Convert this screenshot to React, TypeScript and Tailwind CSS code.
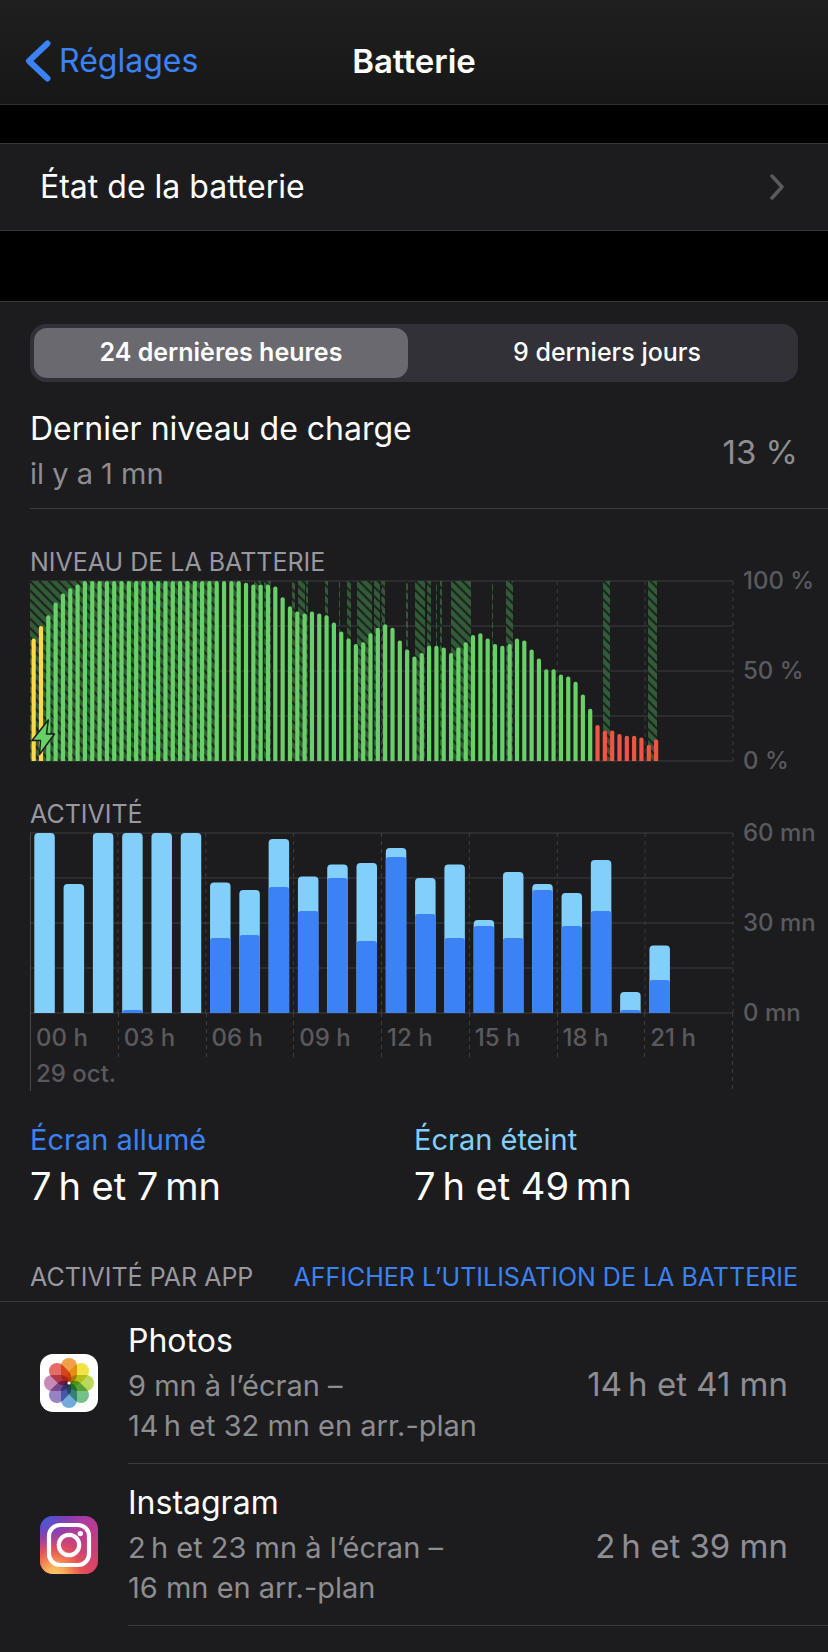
import React, { useState } from 'react';

const levels = [
  68, 75, 81, 88, 93, 96, 98, 100, 100, 100, 100, 100, 100, 100, 100, 100,
  100, 100, 100, 100, 100, 100, 100, 100, 100, 100, 100, 100, 100, 99, 98, 98,
  98, 97, 91, 86, 83, 82, 83, 82, 81, 77, 72, 68, 65, 66, 71, 74,
  76, 74, 67, 62, 58, 60, 64, 64, 63, 60, 63, 66, 70, 71, 68, 65,
  64, 65, 68, 67, 62, 57, 51, 51, 48, 47, 44, 37, 29, 20, 17, 17,
  15, 14, 14, 13, 9, 12,
];

// [start, width] of every charging period, in chart units
const charging = [
  [0, 188], [203, 4], [224, 7], [234, 7], [262, 3], [268, 7], [276, 2],
  [295, 3], [309, 1], [317, 4], [327, 15], [344, 6], [352, 3], [376, 2],
  [385, 10], [397, 4], [406, 1], [410, 2], [421, 20], [462, 1], [476, 7],
  [573, 7], [618, 9],
];

// [total minutes, minutes with the screen on] for each hour
const activity = [
  [60, 0], [43, 0], [60, 0], [60, 1], [60, 0], [60, 0], [43.5, 25], [41, 26],
  [58, 42], [45.5, 34], [49.5, 45], [50, 24], [55, 52], [45, 33], [49.5, 25], [31, 29],
  [47, 25], [43, 41], [40, 29], [51, 34], [7, 1], [22.5, 11],
];

const hours = ['00 h', '03 h', '06 h', '09 h', '12 h', '15 h', '18 h', '21 h'];

const apps = [
  {
    name: 'Photos',
    icon: <PhotosIcon />,
    lines: ['9 mn à l’écran –', '14\u202fh et 32 mn en arr.-plan'],
    total: '14\u202fh et 41 mn',
  },
  {
    name: 'Instagram',
    icon: <InstagramIcon />,
    lines: ['2\u202fh et 23 mn à l’écran –', '16 mn en arr.-plan'],
    total: '2\u202fh et 39 mn',
  },
];

const CHART_WIDTH = 703;

function bar(x: number, y: number, w: number, r: number) {
  const radius = Math.min(r, 180 - y);
  return `M${x} 180V${y + radius}q0 ${-radius} ${radius} ${-radius}h${w - 2 * radius}q${radius} 0 ${radius} ${radius}V180z`;
}

function barColor(level: number, index: number) {
  if (index < 2) return '#fed945';
  return level <= 20 ? '#ef5545' : '#67d067';
}

function PhotosIcon() {
  const petals = ['#f0a045', '#f3e342', '#bcd85a', '#74c088', '#74abdc', '#9683c4', '#c689b8', '#e46c64'];
  return (
    <svg viewBox="0 0 58 58" className="size-[58px] isolate" aria-hidden="true">
      <rect width="58" height="58" rx="13" fill="#fff" />
      {petals.map((color, i) => (
        <rect
          key={color}
          x="21"
          y="4"
          width="16"
          height="25"
          rx="8"
          fill={color}
          transform={`rotate(${i * 45} 29 29)`}
          className="mix-blend-multiply"
        />
      ))}
      <circle cx="29" cy="29" r="1.6" fill="#fff" />
    </svg>
  );
}

function InstagramIcon() {
  return (
    <svg viewBox="0 0 58 58" className="size-[58px]" aria-hidden="true">
      <defs>
        <linearGradient id="ig-base" x1="0.1" y1="0" x2="0.8" y2="1">
          <stop offset="0" stopColor="#6a3fc0" />
          <stop offset="0.4" stopColor="#b03a9c" />
          <stop offset="1" stopColor="#dc3f62" />
        </linearGradient>
        <radialGradient id="ig-warm" cx="0.25" cy="1.05" r="0.85">
          <stop offset="0" stopColor="#fbd673" />
          <stop offset="0.25" stopColor="#f7a556" />
          <stop offset="0.55" stopColor="#e8584f" stopOpacity="0.9" />
          <stop offset="1" stopColor="#d0407c" stopOpacity="0" />
        </radialGradient>
        <radialGradient id="ig-cold" cx="0.05" cy="0" r="0.55">
          <stop offset="0" stopColor="#4263d8" />
          <stop offset="1" stopColor="#6a3fc0" stopOpacity="0" />
        </radialGradient>
      </defs>
      <rect width="58" height="58" rx="13" fill="url(#ig-base)" />
      <rect width="58" height="58" rx="13" fill="url(#ig-warm)" />
      <rect width="58" height="58" rx="13" fill="url(#ig-cold)" />
      <g fill="none" stroke="#fff" strokeWidth="4.2">
        <rect x="9" y="9" width="40" height="40" rx="11" />
        <circle cx="29" cy="29" r="10.2" />
      </g>
      <circle cx="40.3" cy="17.6" r="2.7" fill="#fff" />
    </svg>
  );
}

function Grid() {
  return (
    <g fill="none">
      {[0, 45, 90, 135, 180].map((y) => (
        <path key={y} d={`M0 ${y}H${CHART_WIDTH}`} stroke="#2c2c2e" strokeWidth="2" />
      ))}
      {[1, 2, 3, 4, 5, 6, 7, 8].map((i) => (
        <path key={i} d={`M${(i * CHART_WIDTH) / 8} 0V180`} stroke="#3d3d40" strokeDasharray="4 4" />
      ))}
    </g>
  );
}

function Axis({ labels }: { labels: string[] }) {
  return (
    <div className="-my-3 flex w-[95px] shrink-0 flex-col justify-between pl-[10px] text-2xl leading-6 font-medium text-[#5a5a5e]">
      {labels.map((label) => (
        <span key={label} className="whitespace-nowrap">{label}</span>
      ))}
    </div>
  );
}

function LevelChart() {
  const step = CHART_WIDTH / 96;
  return (
    <svg
      viewBox={`0 0 ${CHART_WIDTH} 180`}
      preserveAspectRatio="none"
      className="h-[180px] min-w-0 flex-1 overflow-visible"
      role="img"
      aria-label="Niveau de la batterie"
    >
      <defs>
        <pattern id="hatch" width="9.4" height="9.4" viewBox="0 0 9 9" patternUnits="userSpaceOnUse">
          <rect width="9" height="9" fill="#315c37" />
          <path d="M-2 -2L11 11M-2 7L2 11M7 -2L11 2" stroke="#1c1f1e" strokeWidth="2" />
        </pattern>
      </defs>
      <Grid />
      {charging.map(([x, w]) => (
        <rect key={x} x={x} y="0" width={w} height="180" fill="url(#hatch)" />
      ))}
      {levels.map((level, i) => (
        <path key={i} d={bar(i * step + step / 2 - 2.1, 180 - level * 1.8, 4.2, 2)} fill={barColor(level, i)} />
      ))}
      <path
        d="M18.3 139L2 159.500H10.500L9.500 173.500L24.500 153H16.500Z"
        fill="#67d067"
        stroke="#1c1c1e"
        strokeWidth="1.500"
        strokeLinejoin="round"
      />
    </svg>
  );
}

function ActivityChart() {
  const step = CHART_WIDTH / 24;
  return (
    <svg
      viewBox={`0 0 ${CHART_WIDTH} 180`}
      preserveAspectRatio="none"
      className="h-[180px] min-w-0 flex-1 overflow-visible"
      role="img"
      aria-label="Activité"
    >
      <Grid />
      <path d="M0.5 0V180" stroke="#48484b" />
      {activity.map(([total, on], i) => (
        <g key={i}>
          <path d={bar(i * step + 4.3, 180 - total * 3, 20.500, 4)} fill="#83cffc" />
          {on > 0 && <path d={bar(i * step + 4.3, 180 - on * 3, 20.500, 3)} fill="#3b82f7" />}
        </g>
      ))}
    </svg>
  );
}

export default function App() {
  const [range, setRange] = useState(0);

  return (
    <div className="min-h-screen bg-[#1c1c1e] font-['Inter',sans-serif] text-white">
      <header className="grid h-[105px] grid-cols-3 items-center border-b border-[#2e2e30] bg-linear-to-b from-[#1f1f20] to-[#171718] pt-[17px] text-[32px] leading-10">
        <a href="#reglages" className="flex items-center gap-[7px] pl-6 text-[#3b82f7]">
          <svg viewBox="0 0 28 42" className="h-[42px] w-7 shrink-0" fill="none" aria-hidden="true">
            <path d="M23.500 3.500L5 21L23.500 38.500" stroke="currentColor" strokeWidth="6" strokeLinecap="round" strokeLinejoin="round" />
          </svg>
          Réglages
        </a>
        <h1 className="text-center text-[33px] font-semibold">Batterie</h1>
      </header>

      <div className="bg-black pt-[38px] pb-[70px]">
        <a
          href="#etat"
          className="flex h-[88px] items-center justify-between border-y border-[#3a3a3d] bg-[#1c1c1e] pr-11 pl-10 text-[32px] leading-10"
        >
          État de la batterie
          <svg viewBox="0 0 14 26" className="h-[26px] w-[14px]" fill="none" aria-hidden="true">
            <path d="M2 2L12 13L2 24" stroke="#5a5a5e" strokeWidth="3.500" strokeLinecap="round" strokeLinejoin="round" />
          </svg>
        </a>
      </div>

      <main className="border-t border-[#3a3a3d] pt-[22px]">
        <div className="mx-[30px] grid h-[58px] grid-cols-2 gap-3 rounded-2xl bg-[#323137] p-1 text-[25px]">
          {['24 dernières heures', '9 derniers jours'].map((label, i) => (
            <button
              key={label}
              type="button"
              aria-pressed={range === i}
              onClick={() => setRange(i)}
              className={`rounded-[13px] ${range === i ? 'bg-[#6a696f] font-semibold' : 'font-medium'}`}
            >
              {label}
            </button>
          ))}
        </div>

        <section className="ml-[30px] flex items-center justify-between border-b border-[#3a3a3d] pt-[27px] pr-[30px] pb-[14px]">
          <div>
            <h2 className="text-[32px] leading-10">Dernier niveau de charge</h2>
            <p className="pt-[5px] text-[29px] leading-10 text-[#8d8d92]">il y a 1 mn</p>
          </div>
          <p className="text-[33px] leading-10 text-[#8d8d92]">13 %</p>
        </section>

        <section className="pt-[34px] pl-[30px]">
          <h2 className="text-[25px] leading-[38px] text-[#98989e]">NIVEAU DE LA BATTERIE</h2>
          <div className="flex">
            <LevelChart />
            <Axis labels={['100 %', '50 %', '0 %']} />
          </div>
        </section>

        <section className="pt-[34px] pl-[30px]">
          <h2 className="text-[25px] leading-[38px] text-[#98989e]">ACTIVITÉ</h2>
          <div className="flex">
            <ActivityChart />
            <Axis labels={['60 mn', '30 mn', '0 mn']} />
          </div>
          <div className="mr-[95px] flex text-2xl font-medium text-[#5a5a5e]">
            <div className="grid h-[78px] flex-1 grid-cols-8">
              {hours.map((hour, i) => (
                <div key={hour} className="flex gap-[5px]">
                  <span
                    className={
                      i === 0
                        ? 'h-[78px] w-px bg-[#48484b]'
                        : 'h-11 w-px bg-[repeating-linear-gradient(#3d3d40_0_4px,transparent_4px_8px)]'
                    }
                  />
                  <div className="pt-[7px] leading-9 whitespace-nowrap">
                    <p>{hour}</p>
                    {i === 0 && <p>29 oct.</p>}
                  </div>
                </div>
              ))}
            </div>
            <span className="h-[78px] w-px bg-[repeating-linear-gradient(#3d3d40_0_4px,transparent_4px_8px)]" />
          </div>
        </section>

        <section className="grid grid-cols-2 px-[30px] pt-[29px]">
          <div>
            <h3 className="text-[29px] leading-10 text-[#3b82f7]">Écran allumé</h3>
            <p className="text-[38px] leading-[52px]">{'7\u202fh et 7\u202fmn'}</p>
          </div>
          <div>
            <h3 className="text-[29px] leading-10 text-[#83cffc]">Écran éteint</h3>
            <p className="text-[38px] leading-[52px]">{'7\u202fh et 49\u202fmn'}</p>
          </div>
        </section>

        <section className="pt-[47px]">
          <div className="flex justify-between border-b border-[#3a3a3d] px-[30px] pb-[6px] text-[25px] leading-9 whitespace-nowrap">
            <h2 className="text-[#98989e]">ACTIVITÉ PAR APP</h2>
            <button type="button" className="text-[#3b82f7]">AFFICHER L’UTILISATION DE LA BATTERIE</button>
          </div>
          <ul>
            {apps.map((app) => (
              <li key={app.name} className="flex items-center gap-[30px] pl-10">
                {app.icon}
                <div className="flex flex-1 items-center justify-between border-b border-[#3a3a3d] pt-[19px] pr-10 pb-[17px]">
                  <div>
                    <h3 className="text-[32px] leading-10">{app.name}</h3>
                    <div className="pt-[5px] text-[29px] leading-10 text-[#8d8d92]">
                      {app.lines.map((line) => (
                        <p key={line}>{line}</p>
                      ))}
                    </div>
                  </div>
                  <p className="text-[33px] leading-10 text-[#8d8d92]">{app.total}</p>
                </div>
              </li>
            ))}
          </ul>
        </section>
      </main>
    </div>
  );
}
